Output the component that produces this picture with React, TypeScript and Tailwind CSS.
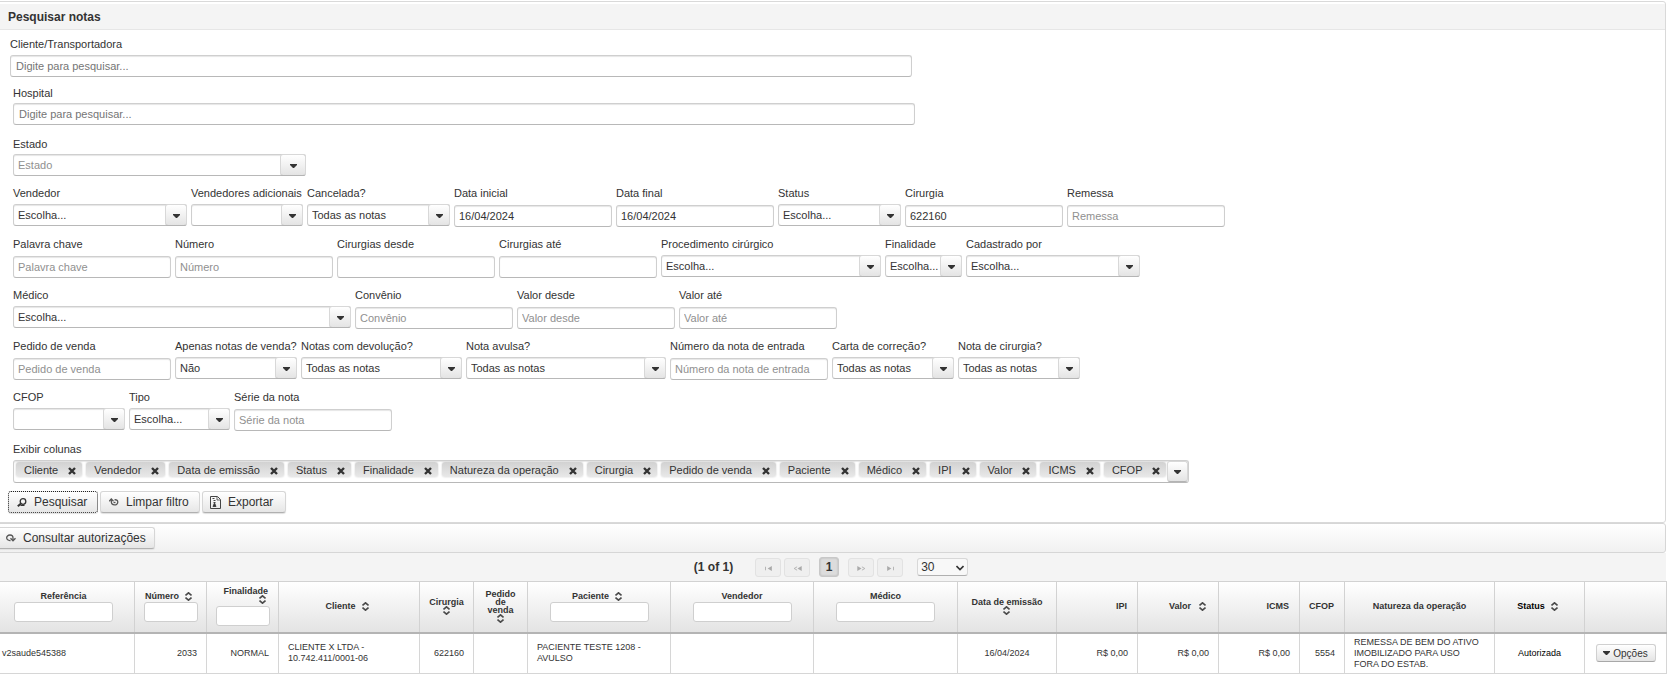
import { useState } from "react";
import type { ReactNode } from "react";

// Shared looks for text boxes, drop-downs and buttons
const boxClass =
  "h-[22px] rounded-[3px] border border-[#cfcfcf] border-b-[#b8b8b8] bg-white text-[11px] text-[#333] shadow-[inset_0_1px_1px_#e6e6e6] outline-none";

const arrowClass =
  "absolute inset-y-0 right-0 flex items-center justify-center rounded-[3px] border border-[#d8d8d8] border-b-[#b4b4b4] bg-linear-to-b from-white to-[#e4e4e4] pt-px";

const buttonBase =
  "flex h-[22px] items-center rounded-[3px] border bg-linear-to-b from-white to-[#e6e6e6] text-[12px] text-[#333] shadow-[0_1px_1px_#e0e0e0]";
const buttonClass = `${buttonBase} border-[#d6d6d6] border-b-[#b0b0b0]`;

const Caret = () => (
  <svg width="7" height="4" viewBox="0 0 7 4" fill="#333" aria-hidden="true">
    <path d="M0 0h7v1L4 4H3L0 1z" />
  </svg>
);

const SortIcon = () => (
  <svg width="7" height="9" viewBox="0 0 7 9" fill="none" stroke="#4a4a4a" strokeWidth="1.6" className="mx-1 shrink-0" aria-hidden="true">
    <path d="M.5 3.5l3-2.7 3 2.7M.5 5.5l3 2.7 3-2.7" />
  </svg>
);

const SearchIcon = () => (
  <svg width="10" height="9" viewBox="0 0 10 9" fill="none" stroke="#333" aria-hidden="true">
    <circle cx="6" cy="3.5" r="2.8" strokeWidth="1.3" />
    <path d="M4 5.5L.8 8.2" strokeWidth="2" />
    <path d="M3.5 7.5h4" strokeWidth="1" />
  </svg>
);

const ResetIcon = () => (
  <svg width="10" height="8" viewBox="0 0 10 8" fill="none" stroke="#555" strokeWidth="1.3" aria-hidden="true">
    <path d="M2.3 1v2.5c0 4.500 6.500 4.500 6.500.5 0-1.800-1.500-2.500-3.300-2.200" />
    <path d="M.2 3.200L2.300 1l2.200 2.200" />
    <path d="M4.500 4.500h2" />
  </svg>
);

const RefreshIcon = () => (
  <svg width="10" height="8" viewBox="0 0 10 8" fill="none" stroke="#555" strokeWidth="1.3" aria-hidden="true">
    <path d="M4.5 6.500C-.5 7-.5 1 4 1c2 0 3 1 3 3v2" />
    <path d="M4.500 4.300L7 6.800l2.500-2.500" />
  </svg>
);

const ExportIcon = () => (
  <svg width="11" height="13" viewBox="0 0 11 13" fill="none" stroke="#444" aria-hidden="true">
    <path d="M.5.5h7l3 3v9H.5z" />
    <path d="M7 1v3h3" strokeWidth=".8" />
    <path d="M2.5 2.5h2M3.500 4.500h2M3.500 6.500h2" />
    <path d="M4.5 7L3 10.500h3z" fill="#333" />
  </svg>
);

const CloseIcon = () => (
  <svg width="8" height="8" viewBox="0 0 8 8" stroke="#333" strokeWidth="2.4" aria-hidden="true">
    <path d="M1 1l6 6M7 1L1 7" />
  </svg>
);

type FieldProps = {
  id: string;
  label: string;
  width: string;
  kind?: "text" | "select";
  value?: string;
  placeholder?: string;
};

// Label on top, control under it
const Field = ({ id, label, width, kind = "text", value = "", placeholder }: FieldProps) => (
  <div className={width}>
    <label htmlFor={id} className="block h-[19px] text-[11px] leading-4 whitespace-nowrap">
      {label}
    </label>
    {kind === "select" ? (
      <div className="relative">
        <select id={id} defaultValue={value} className={`${boxClass} block w-full appearance-none pr-5 pl-1`}>
          <option value={value}>{value}</option>
        </select>
        <span className={`${arrowClass} pointer-events-none w-[22px]`}>
          <Caret />
        </span>
      </div>
    ) : (
      <input id={id} type="text" defaultValue={value} placeholder={placeholder} className={`${boxClass} mt-px block w-full px-1 placeholder:text-[#909090]`} />
    )}
  </div>
);

const rows: FieldProps[][] = [
  [
    { id: "vendedor", label: "Vendedor", width: "w-[174px]", kind: "select", value: "Escolha..." },
    { id: "vendedores", label: "Vendedores adicionais", width: "w-[112px]", kind: "select" },
    { id: "cancelada", label: "Cancelada?", width: "w-[143px]", kind: "select", value: "Todas as notas" },
    { id: "dataInicial", label: "Data inicial", width: "w-[158px]", value: "16/04/2024" },
    { id: "dataFinal", label: "Data final", width: "w-[158px]", value: "16/04/2024" },
    { id: "status", label: "Status", width: "w-[123px]", kind: "select", value: "Escolha..." },
    { id: "cirurgia", label: "Cirurgia", width: "w-[158px]", value: "622160" },
    { id: "remessa", label: "Remessa", width: "w-[158px]", placeholder: "Remessa" },
  ],
  [
    { id: "palavra", label: "Palavra chave", width: "w-[158px]", placeholder: "Palavra chave" },
    { id: "numero", label: "Número", width: "w-[158px]", placeholder: "Número" },
    { id: "desde", label: "Cirurgias desde", width: "w-[158px]" },
    { id: "ate", label: "Cirurgias até", width: "w-[158px]" },
    { id: "procedimento", label: "Procedimento cirúrgico", width: "w-[220px]", kind: "select", value: "Escolha..." },
    { id: "finalidade", label: "Finalidade", width: "w-[77px]", kind: "select", value: "Escolha..." },
    { id: "cadastrado", label: "Cadastrado por", width: "w-[174px]", kind: "select", value: "Escolha..." },
  ],
  [
    { id: "medico", label: "Médico", width: "w-[338px]", kind: "select", value: "Escolha..." },
    { id: "convenio", label: "Convênio", width: "w-[158px]", placeholder: "Convênio" },
    { id: "valorDesde", label: "Valor desde", width: "w-[158px]", placeholder: "Valor desde" },
    { id: "valorAte", label: "Valor até", width: "w-[158px]", placeholder: "Valor até" },
  ],
  [
    { id: "pedido", label: "Pedido de venda", width: "w-[158px]", placeholder: "Pedido de venda" },
    { id: "apenas", label: "Apenas notas de venda?", width: "w-[122px]", kind: "select", value: "Não" },
    { id: "devolucao", label: "Notas com devolução?", width: "w-[161px]", kind: "select", value: "Todas as notas" },
    { id: "avulsa", label: "Nota avulsa?", width: "w-[200px]", kind: "select", value: "Todas as notas" },
    { id: "entrada", label: "Número da nota de entrada", width: "w-[158px]", placeholder: "Número da nota de entrada" },
    { id: "carta", label: "Carta de correção?", width: "w-[122px]", kind: "select", value: "Todas as notas" },
    { id: "notaCirurgia", label: "Nota de cirurgia?", width: "w-[122px]", kind: "select", value: "Todas as notas" },
  ],
  [
    { id: "cfop", label: "CFOP", width: "w-[112px]", kind: "select" },
    { id: "tipo", label: "Tipo", width: "w-[101px]", kind: "select", value: "Escolha..." },
    { id: "serie", label: "Série da nota", width: "w-[158px]", placeholder: "Série da nota" },
  ],
];

const initialColumns = [
  "Cliente", "Vendedor", "Data de emissão", "Status", "Finalidade", "Natureza da operação", "Cirurgia",
  "Pedido de venda", "Paciente", "Médico", "IPI", "Valor", "ICMS", "CFOP",
];

type Column = {
  title: string;
  width: string;
  cell: ReactNode;
  align?: string; // alignment of the body cell
  headAlign?: string;
  sort?: "side" | "below";
  filter?: string; // width of the filter box
  color?: string;
};

const columns: Column[] = [
  { title: "Referência", width: "w-[142px]", cell: "v2saude545388", filter: "w-[99px]" },
  { title: "Número", width: "w-[72px]", cell: "2033", align: "text-right", sort: "side", filter: "w-[54px]" },
  { title: "Finalidade", width: "w-[72px]", cell: "NORMAL", align: "text-right", headAlign: "items-end", sort: "below", filter: "w-[54px]" },
  { title: "Cliente", width: "w-[141px]", cell: "CLIENTE X LTDA - 10.742.411/0001-06", sort: "side" },
  { title: "Cirurgia", width: "w-[54px]", cell: "622160", align: "text-right", sort: "below" },
  { title: "Pedido de venda", width: "w-[54px]", cell: "", sort: "below" },
  { title: "Paciente", width: "w-[143px]", cell: "PACIENTE TESTE 1208 - AVULSO", sort: "side", filter: "w-[99px]" },
  { title: "Vendedor", width: "w-[143px]", cell: "", filter: "w-[99px]" },
  { title: "Médico", width: "w-[144px]", cell: "", filter: "w-[99px]" },
  { title: "Data de emissão", width: "w-[99px]", cell: "16/04/2024", align: "text-center", sort: "below" },
  { title: "IPI", width: "w-[81px]", cell: "R$ 0,00", align: "text-right", headAlign: "items-end" },
  { title: "Valor", width: "w-[81px]", cell: "R$ 0,00", align: "text-right", headAlign: "items-end", sort: "side" },
  { title: "ICMS", width: "w-[81px]", cell: "R$ 0,00", align: "text-right", headAlign: "items-end" },
  { title: "CFOP", width: "w-[45px]", cell: "5554", align: "text-right", headAlign: "items-end" },
  { title: "Natureza da operação", width: "w-[150px]", cell: "REMESSA DE BEM DO ATIVO IMOBILIZADO PARA USO FORA DO ESTAB." },
  { title: "Status", width: "w-[90px]", cell: "Autorizada", align: "text-center", sort: "side", color: "text-black" },
  {
    title: "",
    width: "w-[82px]",
    align: "text-center",
    cell: (
      <button type="button" className="mx-auto flex h-[18px] w-[60px] items-center justify-center gap-[3px] rounded-[3px] border border-[#d0d0d0] border-b-[#a8a8a8] bg-linear-to-b from-white to-[#e4e4e4] text-[10px]">
        <Caret />
        Opções
      </button>
    ),
  },
];

const PagerButton = ({ label, children }: { label: string; children: ReactNode }) => (
  <button type="button" disabled aria-label={label} className="flex h-[19px] w-[26px] items-center justify-center rounded-[3px] border border-[#e2e2e2] bg-[#efefef] pt-0.5">
    <svg width="9" height="5" viewBox="0 0 10 6" fill="#aaa" aria-hidden="true">
      {children}
    </svg>
  </button>
);

export default function App() {
  const [visible, setVisible] = useState<string[]>(initialColumns);

  return (
    <div className="overflow-x-hidden bg-white pt-px font-['Liberation_Sans',Arial,sans-serif] text-[#333]">
      {/* The page bleeds a little past the left edge */}
      <div className="mr-px -ml-2">
        <section className="rounded-[3px] border border-[#d9d9d9] pt-0.5">
          <h1 className="h-[26px] border-b border-[#e6e6e6] bg-[#f4f4f4] pl-[15px] text-[12px] leading-[26px] font-bold">Pesquisar notas</h1>

          <form className="pb-[9px]" onSubmit={(e) => e.preventDefault()}>
            <div className="pt-1.5 pl-[17px]">
              <label htmlFor="transportadora" className="block h-[19px] text-[11px] leading-4">Cliente/Transportadora</label>
              <input id="transportadora" type="text" placeholder="Digite para pesquisar..." className={`${boxClass} block w-[902px] max-w-full px-[5px] placeholder:text-[#757575]`} />
            </div>
            <div className="pt-2 pl-5">
              <label htmlFor="hospital" className="block h-[18px] text-[11px] leading-4">Hospital</label>
              <input id="hospital" type="text" placeholder="Digite para pesquisar..." className={`${boxClass} block w-[902px] max-w-full px-[5px] placeholder:text-[#757575]`} />
            </div>
            <div className="pt-[11px] pl-5">
              <label htmlFor="estado" className="block h-[18px] text-[11px] leading-4">Estado</label>
              <div className="relative w-[293px]">
                <input id="estado" type="text" placeholder="Estado" className={`${boxClass} block w-full pr-7 pl-1 placeholder:text-[#909090]`} />
                <button type="button" aria-label="Mostrar estados" className={`${arrowClass} w-[26px]`}>
                  <Caret />
                </button>
              </div>
            </div>

            <div className="flex flex-col gap-[9px] pt-[9px] pl-5">
              {rows.map((row) => (
                <div key={row[0].id} className="flex flex-wrap gap-x-1">
                  {row.map((field) => (
                    <Field key={field.id} {...field} />
                  ))}
                </div>
              ))}
            </div>

            {/* Column picker */}
            <div className="pt-2.5 pl-5">
              <span id="colunas" className="block h-[19px] text-[11px] leading-4">Exibir colunas</span>
              <div role="group" aria-labelledby="colunas" className="relative flex min-h-[23px] w-fit flex-wrap items-start gap-x-1 rounded-[3px] border border-[#cfcfcf] border-b-[#b8b8b8] bg-white pt-px pr-[22px] pl-0.5 shadow-[inset_0_1px_1px_#e6e6e6]">
                {visible.map((name) => (
                  <span key={name} className="flex h-[15px] items-center rounded-[3px] bg-linear-to-b from-[#d2d2d2] to-[#e8e8e8] pr-1.5 pl-2 text-[11px] leading-3 shadow-[0_0_2px_#ccc]">
                    {name}
                    <button type="button" aria-label={`Remover ${name}`} className="ml-2.5 pt-0.5" onClick={() => setVisible(visible.filter((v) => v !== name))}>
                      <CloseIcon />
                    </button>
                  </span>
                ))}
                <button type="button" aria-label="Escolher colunas" className={`${arrowClass} w-[21px]`}>
                  <Caret />
                </button>
              </div>
            </div>

            <div className="flex gap-0.5 pt-2 pl-[15px]">
              <button type="submit" className={`${buttonBase} w-[90px] gap-[7px] border-dotted border-[#222] pl-2`}>
                <SearchIcon />
                Pesquisar
              </button>
              <button type="reset" className={`${buttonClass} w-[100px] gap-[7px] pl-2`}>
                <ResetIcon />
                Limpar filtro
              </button>
              <button type="button" className={`${buttonClass} w-[84px] gap-[7px] pl-[7px]`}>
                <ExportIcon />
                Exportar
              </button>
            </div>
          </form>
        </section>

        <div className="rounded-[3px] border border-[#d6d6d6] bg-linear-to-b from-white to-[#f1f1f1] py-[3px] pl-1">
          <button type="button" className={`${buttonClass} w-[158px] gap-[7px] pl-2`}>
            <RefreshIcon />
            Consultar autorizações
          </button>
        </div>

        {/* Paginator */}
        <div className="flex h-7 items-center justify-center bg-[#f4f4f4] pl-1 text-[12px]">
          <span className="mr-[22px] font-bold">(1 of 1)</span>
          <div className="flex gap-[3px]">
            <PagerButton label="Primeira página">
              <path d="M1 1h1v4H1zM9 0v6L4 3z" />
            </PagerButton>
            <PagerButton label="Página anterior">
              <path d="M10 0v6L5 3z" />
              <path d="M4.5 1L1 3l3.5 2" fill="none" stroke="#aaa" />
            </PagerButton>
          </div>
          <button type="button" className="mx-[9px] h-5 w-5 rounded-[3px] border border-[#c8c8c8] bg-[#dcdcdc] leading-4 font-bold shadow-[inset_0_0_2px_#aaa]">1</button>
          <div className="flex gap-[3px]">
            <PagerButton label="Próxima página">
              <path d="M0 0v6l5-3z" />
              <path d="M5.5 1L9 3 5.5 5" fill="none" stroke="#aaa" />
            </PagerButton>
            <PagerButton label="Última página">
              <path d="M8 1h1v4H8zM1 0v6l5-3z" />
            </PagerButton>
          </div>
          <div className="relative ml-3.5">
            <select aria-label="Linhas por página" defaultValue="30" className="block h-[18px] w-[51px] appearance-none rounded-[3px] border border-[#d8d8d8] border-b-[#b0b0b0] bg-[#f8f8f8] pl-[3px] leading-4">
              <option>30</option>
              <option>60</option>
            </select>
            <svg width="8" height="6" viewBox="0 0 8 6" fill="none" stroke="#333" strokeWidth="1.6" className="pointer-events-none absolute top-[7px] right-1" aria-hidden="true">
              <path d="M.5 1L4 4.5 7.5 1" />
            </svg>
          </div>
        </div>

        <table className="w-full table-fixed border-collapse text-[9px] leading-[11px]">
          <thead>
            <tr className="h-[51px] bg-linear-to-b from-white to-[#e3e3e3]">
              {columns.map((col) => (
                <th key={col.title} className={`${col.width} border border-[#d2d2d2] border-b-2 border-b-[#b4b4b4] p-0 align-middle font-bold ${col.color ?? ""}`}>
                  <div className={`flex flex-col px-2 ${col.headAlign ?? "items-center"}`}>
                    <div className={col.sort === "below" ? `flex flex-col leading-2 ${col.headAlign ?? "items-center"}` : "flex items-center"}>
                      <span className={col.headAlign === "items-end" ? "pr-0.5" : ""}>{col.title}</span>
                      {col.sort === "side" && <span className="ml-0.5"><SortIcon /></span>}
                      {col.sort === "below" && <SortIcon />}
                    </div>
                    {col.filter && (
                      <input
                        type="text"
                        aria-label={`Filtrar ${col.title}`}
                        className={`${col.filter} ${col.sort === "below" ? "mt-0.5" : ""} h-5 rounded-[3px] border border-[#cfcfcf] bg-white px-1 font-normal`}
                      />
                    )}
                  </div>
                </th>
              ))}
            </tr>
          </thead>
          <tbody>
            <tr>
              {columns.map((col) => (
                <td key={col.title} className={`h-10 border border-[#d6d6d6] px-[9px] py-[3px] ${col.align ?? ""} ${col.color ?? ""}`}>
                  {col.cell}
                </td>
              ))}
            </tr>
          </tbody>
        </table>
      </div>
    </div>
  );
}
